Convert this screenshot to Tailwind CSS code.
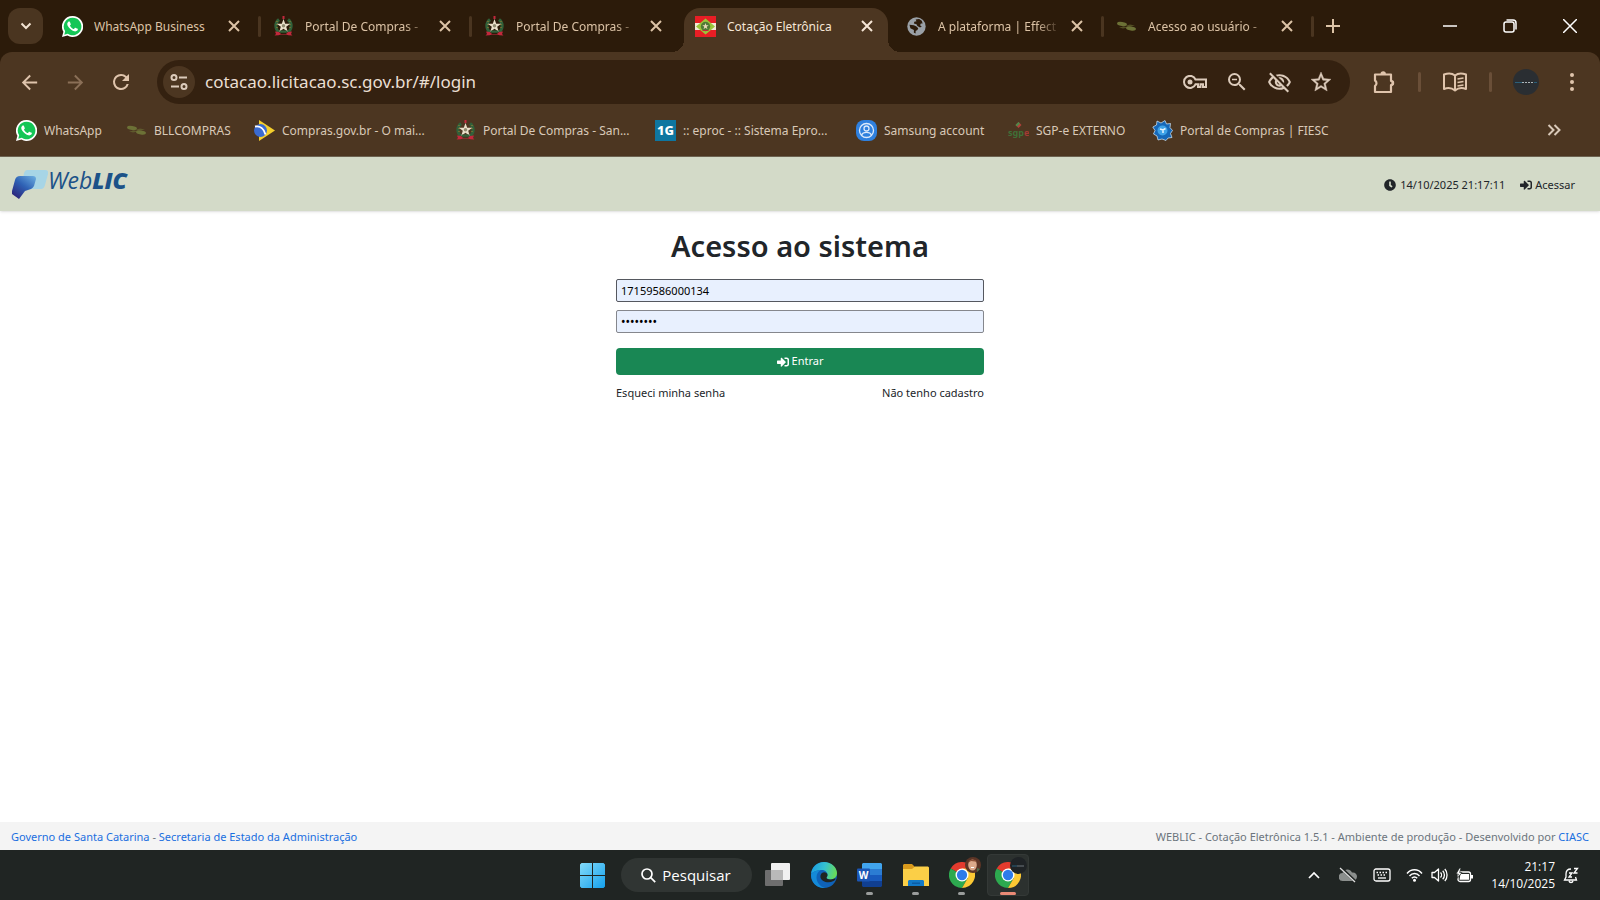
<!DOCTYPE html>
<html lang="pt-BR">

<head>
    <meta charset="UTF-8">
    <meta name="viewport" content="width=device-width, initial-scale=1.0">
    <title>Cotação Eletrônica</title>
    <script src="https://cdn.jsdelivr.net/npm/@tailwindcss/browser@4"></script>
</head>

<body class="h-screen flex flex-col overflow-hidden bg-white font-['Noto_Sans','Open_Sans',sans-serif] text-[#212529]">

    <!-- Shared icons -->
    <svg class="hidden" aria-hidden="true">
        <symbol id="whatsapp" viewBox="0 0 24 24">
            <path fill="#fff" d="M12 0a12 12 0 0 0-10.4 18L0 24l6.200-1.600A12 12 0 1 0 12 0z" />
            <path fill="#14c656" d="M12 2a10 10 0 0 0-8.400 15.400L2.600 21.300l4-1A10 10 0 1 0 12 2z" />
            <path fill="#fff"
                d="M17.472 14.382c-.297-.149-1.758-.867-2.030-.967-.273-.099-.471-.148-.670.150-.197.297-.767.966-.940 1.164-.173.199-.347.223-.644.075-.297-.150-1.255-.463-2.390-1.475-.883-.788-1.480-1.761-1.653-2.059-.173-.297-.018-.458.130-.606.134-.133.298-.347.446-.520.149-.174.198-.298.298-.497.099-.198.050-.371-.025-.520-.075-.149-.669-1.612-.916-2.207-.242-.579-.487-.500-.669-.510-.173-.008-.371-.010-.570-.010-.198 0-.520.074-.792.372-.272.297-1.040 1.016-1.040 2.479 0 1.462 1.065 2.875 1.213 3.074.149.198 2.096 3.200 5.077 4.487.709.306 1.262.489 1.694.625.712.227 1.360.195 1.871.118.571-.085 1.758-.719 2.006-1.413.248-.694.248-1.289.173-1.413-.074-.124-.272-.198-.570-.347" />
        </symbol>
        <symbol id="brasao" viewBox="0 0 21 21">
            <path fill="none" stroke="#31613a" stroke-width="3" d="M6 3.500C1.500 7 2 13 6 16.500M15 3.500c4.500 3.500 4 9.500 0 13" />
            <path fill="none" stroke="#a9812f" stroke-width="1" stroke-dasharray="1 2" d="M4 5v9M17 5v9" />
            <path fill="#e9dfc9" d="M10.500 3l1.700 4.700h5l-4 3 1.500 5-4.200-3-4.200 3 1.500-5-4-3h5z" />
            <circle cx="10.500" cy="9.800" r="1.700" fill="#8f8a70" />
            <path fill="#c3283c" d="M9.500 0h2v3h-2zM2 15.500l4 .5 2 2h5l2-2 4-.5-1 2.500 1.500 1.500-4-.2L13 18.500H8l-2.500.8-4 .2L3 18z" />
            <path fill="#31613a" d="M7 14.500h7v2.200H7z" />
        </symbol>
        <symbol id="bll" viewBox="0 0 21 21">
            <g fill="#6c7136">
                <ellipse cx="6" cy="8" rx="5" ry="2" transform="rotate(8 6 8)" />
                <ellipse cx="15" cy="12.500" rx="5" ry="2" transform="rotate(8 15 12.500)" />
                <path d="M9 10l5-1.500 5 1-5 1zM3 11.500l5-1 4 1-5 1z" opacity=".6" />
            </g>
        </symbol>
        <symbol id="close" viewBox="0 0 12 12">
            <path fill="none" stroke="currentColor" stroke-width="2" d="M1 1l10 10M11 1L1 11" />
        </symbol>
        <symbol id="signin" viewBox="0 0 512 512">
            <path fill="currentColor"
                d="M416 448h-84c-6.600 0-12-5.400-12-12v-40c0-6.600 5.400-12 12-12h84c17.700 0 32-14.300 32-32V160c0-17.700-14.300-32-32-32h-84c-6.600 0-12-5.400-12-12V76c0-6.600 5.400-12 12-12h84c53 0 96 43 96 96v192c0 53-43 96-96 96zm-47-201L201 79c-15-15-41-4.500-41 17v96H24c-13.300 0-24 10.700-24 24v96c0 13.300 10.700 24 24 24h136v96c0 21.500 26 32 41 17l168-168c9.300-9.400 9.300-24.600 0-34z" />
        </symbol>
        <symbol id="chrome" viewBox="0 0 48 48">
            <path fill="#e33b2e" d="M24 24L3.200 12A24 24 0 0 1 44.800 12z" />
            <path fill="#2da94f" d="M24 24L3.200 12A24 24 0 0 0 24 48l10.400-18z" />
            <path fill="#fcc934" d="M24 24l10.400 6L24 48A24 24 0 0 0 44.800 12H24z" />
            <circle cx="24" cy="24" r="12" fill="#fff" />
            <circle cx="24" cy="24" r="9.500" fill="#2f7bea" />
        </symbol>
    </svg>

    <!-- Tab strip -->
    <header class="shrink-0 bg-[#2c1b0a]">
        <div class="flex h-[52px] text-[12px] text-[#dcc3a6]">
            <button aria-label="Pesquisar guias" class="mt-2 ml-2 mr-2 h-9 w-[35px] shrink-0 flex items-center justify-center rounded-xl bg-[#4a3520] text-[#f3e3d2]">
                <svg class="w-3 h-3" viewBox="0 0 12 12"><path fill="none" stroke="currentColor" stroke-width="2" d="M1.500 3.500L6 8l4.500-4.500" /></svg>
            </button>
            <nav class="flex min-w-0">
                <div class="w-[211px] min-w-0 flex items-center pl-[11px]">
                    <svg class="w-[21px] h-[21px] mr-[11px] shrink-0"><use href="#whatsapp" /></svg>
                    <a href="#" class="flex-1 pt-0.5 overflow-hidden whitespace-nowrap">WhatsApp Business</a>
                    <button aria-label="Fechar" class="w-8 flex justify-center shrink-0"><svg class="w-3 h-3"><use href="#close" /></svg></button>
                    <span class="ml-2 mr-px w-[3px] h-[21px] rounded bg-[#4a3520]"></span>
                </div>
                <div class="w-[211px] min-w-0 flex items-center pl-[11px]">
                    <svg class="w-[21px] h-[21px] mr-[11px] shrink-0"><use href="#brasao" /></svg>
                    <a href="#" class="flex-1 pt-0.5 overflow-hidden whitespace-nowrap mask-r-from-80%">Portal De Compras -</a>
                    <button aria-label="Fechar" class="w-8 flex justify-center shrink-0"><svg class="w-3 h-3"><use href="#close" /></svg></button>
                    <span class="ml-2 mr-px w-[3px] h-[21px] rounded bg-[#4a3520]"></span>
                </div>
                <div class="w-[211px] min-w-0 flex items-center pl-[11px]">
                    <svg class="w-[21px] h-[21px] mr-[11px] shrink-0"><use href="#brasao" /></svg>
                    <a href="#" class="flex-1 pt-0.5 overflow-hidden whitespace-nowrap mask-r-from-80%">Portal De Compras -</a>
                    <button aria-label="Fechar" class="w-8 mr-3 flex justify-center shrink-0"><svg class="w-3 h-3"><use href="#close" /></svg></button>
                </div>
                <div class="w-[211px] min-w-0 flex pt-2 pr-[7px] text-[#f6e6d6]">
                    <div class="relative flex-1 min-w-0 flex items-center pl-[11px] pb-2 pr-[5px] rounded-t-2xl bg-[#4c3621]">
                        <span class="absolute bottom-0 -left-3 size-3 bg-[radial-gradient(circle_at_0_0,transparent_12px,#4c3621_12px)]"></span>
                        <span class="absolute bottom-0 -right-3 size-3 bg-[radial-gradient(circle_at_100%_0,transparent_12px,#4c3621_12px)]"></span>
                        <svg class="w-[21px] h-[21px] mr-[11px] shrink-0" viewBox="0 0 21 21">
                            <path fill="#e81e25" d="M0 0h21v21H0z" /><path fill="#f4e9d8" d="M0 7h21v7H0z" />
                            <path fill="#9bc53a" d="M10.500 2.500L20 10.500l-9.500 8-9.500-8z" />
                            <circle cx="10.500" cy="10.500" r="4.700" fill="#4f7a35" /><path fill="#e8d8b8" d="M10.500 7l.8 2.300h2.400l-2 1.500.8 2.400-2-1.500-2 1.500.8-2.400-2-1.500h2.400z" />
                            <path fill="#c3283c" d="M7.500 14h6v1h-6z" />
                        </svg>
                        <a href="#" class="flex-1 pt-0.5 overflow-hidden whitespace-nowrap">Cotação Eletrônica</a>
                        <button aria-label="Fechar" class="w-8 flex justify-center shrink-0"><svg class="w-3 h-3"><use href="#close" /></svg></button>
                    </div>
                </div>
                <div class="w-[210px] min-w-0 flex items-center pl-[11px]">
                    <svg class="w-[21px] h-[21px] mr-[11px] shrink-0" viewBox="0 0 24 24"><circle cx="12" cy="12" r="10.500" fill="#9aa0a6" /><path fill="#2c1b0a" d="M4 10l5 .5 3 1.500 2 2-1 2-2 1v3l-2-1v-3l-4-2zM11 4l4-.5 3 2 1 3h-2l-1 2 2 1.500-2 1-3-1.500-1-2-3-1 .5-2L12 6z" /></svg>
                    <a href="#" class="flex-1 pt-0.5 overflow-hidden whitespace-nowrap mask-r-from-80%">A plataforma | Effect</a>
                    <button aria-label="Fechar" class="w-8 flex justify-center shrink-0"><svg class="w-3 h-3"><use href="#close" /></svg></button>
                    <span class="ml-2 mr-px w-[3px] h-[21px] rounded bg-[#4a3520]"></span>
                </div>
                <div class="w-[210px] min-w-0 flex items-center pl-[11px]">
                    <svg class="w-[21px] h-[21px] mr-[11px] shrink-0"><use href="#bll" /></svg>
                    <a href="#" class="flex-1 pt-0.5 overflow-hidden whitespace-nowrap mask-r-from-80%">Acesso ao usuário -</a>
                    <button aria-label="Fechar" class="w-8 flex justify-center shrink-0"><svg class="w-3 h-3"><use href="#close" /></svg></button>
                    <span class="ml-2 mr-px w-[3px] h-[21px] rounded bg-[#4a3520]"></span>
                </div>
            </nav>
            <button aria-label="Nova guia" class="w-9 shrink-0 flex items-center justify-center">
                <svg class="w-[14px] h-[14px]" viewBox="0 0 14 14"><path fill="none" stroke="currentColor" stroke-width="2" d="M7 0v14M0 7h14" /></svg>
            </button>
            <div class="ml-auto flex shrink-0 text-white">
                <button aria-label="Minimizar" class="w-[60px] flex items-center justify-center"><svg class="w-[14px] h-[14px]" viewBox="0 0 14 14"><path stroke="currentColor" stroke-width="1.500" d="M0 7h14" /></svg></button>
                <button aria-label="Restaurar" class="w-[60px] flex items-center justify-center"><svg class="w-[14px] h-[14px]" viewBox="0 0 14 14"><g fill="none" stroke="currentColor" stroke-width="1.500"><rect x="1" y="3" width="10" height="10" rx="2" /><path d="M3.500 1H10a3 3 0 0 1 3 3v6.500" /></g></svg></button>
                <button aria-label="Fechar janela" class="w-[60px] flex items-center justify-center"><svg class="w-[14px] h-[14px]" viewBox="0 0 14 14"><path stroke="currentColor" stroke-width="1.500" d="M0 0l14 14M14 0L0 14" /></svg></button>
            </div>
        </div>

        <!-- Toolbar -->
        <div class="rounded-t-xl bg-[#4c3621] pt-2 border-b border-[#6e6452]">
            <div class="h-11 flex items-center pl-[6px] pr-4 text-[#dfc4ac]">
                <button aria-label="Voltar" class="w-[46px] flex justify-center"><svg class="w-[23px] h-[23px]" viewBox="0 0 24 24"><path fill="currentColor" d="M20 11H7.830l5.590-5.590L12 4l-8 8 8 8 1.410-1.410L7.830 13H20v-2z" /></svg></button>
                <button aria-label="Avançar" class="w-[46px] flex justify-center text-[#8a6f57]"><svg class="w-[23px] h-[23px]" viewBox="0 0 24 24"><path fill="currentColor" d="M12 4l-1.410 1.410L16.170 11H4v2h12.170l-5.580 5.590L12 20l8-8z" /></svg></button>
                <button aria-label="Recarregar" class="w-[46px] flex justify-center"><svg class="w-6 h-6" viewBox="0 0 24 24"><path fill="currentColor" d="M17.650 6.350A7.958 7.958 0 0 0 12 4a8 8 0 1 0 7.730 10h-2.080A6 6 0 1 1 12 6c1.660 0 3.140.690 4.220 1.780L13 11h7V4z" /></svg></button>
                <div class="ml-[13px] flex-1 min-w-0 h-11 flex items-center rounded-full bg-[#342110] pl-[6px] pr-2 text-[#dccbbb]">
                    <button aria-label="Informações do site" class="w-8 h-8 rounded-full bg-[#4c3621] flex items-center justify-center shrink-0">
                        <svg class="w-[18px] h-[18px]" viewBox="0 0 18 18"><g fill="none" stroke="currentColor" stroke-width="2"><circle cx="4" cy="4.500" r="2.500" /><path d="M9 4.500h8M1 13.500h8" /><circle cx="14" cy="13.500" r="2.500" /></g></svg>
                    </button>
                    <input type="text" aria-label="Endereço" value="cotacao.licitacao.sc.gov.br/#/login" class="ml-[10px] flex-1 min-w-0 text-[17px] text-[#eadfd3] outline-none">
                    <button aria-label="Senhas" class="w-[42px] flex justify-center"><svg class="w-6 h-[14px]" viewBox="0 0 24 14"><g fill="none" stroke="currentColor" stroke-width="2"><path d="M12.500 4.500H23v7.500h-3V9.300h-2.500V12H15V9.300h-2.500A6 6 0 1 1 12.500 4.500z" /></g><circle cx="7" cy="7" r="2.500" fill="currentColor" /></svg></button>
                    <button aria-label="Zoom" class="w-[42px] flex justify-center"><svg class="w-6 h-6" viewBox="0 0 24 24"><path fill="currentColor" d="M15.500 14h-.790l-.280-.270A6.471 6.471 0 0 0 16 9.500 6.500 6.500 0 1 0 9.500 16c1.610 0 3.090-.590 4.230-1.570l.270.280v.790l5 4.990L20.490 19l-4.990-5zm-6 0C7.010 14 5 11.990 5 9.500S7.010 5 9.500 5 14 7.010 14 9.500 11.990 14 9.500 14zM7 8.700h5v1.600H7z" /></svg></button>
                    <button aria-label="Cookies bloqueados" class="w-[42px] flex justify-center"><svg class="w-[25px] h-[25px]" viewBox="0 0 24 24"><path fill="currentColor" d="M12 6c3.790 0 7.170 2.130 8.820 5.500-.590 1.220-1.420 2.270-2.410 3.120l1.410 1.410c1.390-1.230 2.490-2.770 3.180-4.530C21.270 7.110 17 4 12 4c-1.270 0-2.490.200-3.640.570l1.650 1.650C10.660 6.090 11.320 6 12 6zm-1.070 1.140L13 9.210c.570.250 1.030.710 1.280 1.280l2.070 2.070c.080-.340.140-.700.140-1.070C16.500 9.010 14.480 7 12 7c-.370 0-.720.050-1.070.140zM2.010 3.870l2.680 2.680C3.060 7.830 1.770 9.530 1 11.500 2.730 15.890 7 19 12 19c1.520 0 2.980-.290 4.320-.820l3.420 3.420 1.410-1.410L3.420 2.450 2.010 3.870zm7.500 7.500l2.610 2.610c-.040.010-.080.020-.120.020-1.380 0-2.500-1.120-2.500-2.500 0-.050.010-.080.010-.130zm-3.400-3.400l1.750 1.750c-.230.550-.360 1.150-.360 1.780 0 2.480 2.020 4.500 4.500 4.500.630 0 1.230-.130 1.770-.360l.980.980c-.880.240-1.800.380-2.750.380-3.790 0-7.170-2.130-8.820-5.500.700-1.430 1.720-2.610 2.930-3.530z" /></svg></button>
                    <button aria-label="Favoritar" class="w-[42px] flex justify-center"><svg class="w-6 h-6" viewBox="0 0 24 24"><path fill="currentColor" stroke="currentColor" stroke-width=".4" d="M22 9.240l-7.190-.620L12 2 9.190 8.630 2 9.240l5.460 4.730L5.820 21 12 17.270 18.180 21l-1.630-7.030L22 9.240zM12 15.400l-3.760 2.270 1-4.280-3.320-2.880 4.380-.380L12 6.100l1.710 4.040 4.380.380-3.320 2.880 1 4.280L12 15.400z" /></svg></button>
                </div>
                <button aria-label="Extensões" class="w-[68px] flex justify-center"><svg class="w-6 h-6" viewBox="0 0 24 24"><path fill="none" stroke="currentColor" stroke-width="2.200" stroke-linejoin="round" d="M3 4.500h16V11a2 2 0 0 1 0 4v7H3v-6a3.300 3.300 0 0 0 0-5.500z" /><path fill="currentColor" d="M8.500 4a2.700 2.700 0 0 1 5.400 0zM19.500 10.300a2.700 2.700 0 0 1 0 5.400z" /></svg></button>
                <span class="w-[3px] h-5 rounded bg-[#6a4f38]"></span>
                <button aria-label="Modo de leitura" class="w-[68px] flex justify-center"><svg class="w-6 h-5" viewBox="0 0 24 20"><path fill="none" stroke="currentColor" stroke-width="2" stroke-linejoin="round" d="M12 3.500C9 1 5 1 1 2.500V17c4-1.500 8-1 11 1.500 3-2.500 7-3 11-1.500V2.500C19 1 15 1 12 3.500zV18" /><path stroke="currentColor" stroke-width="1.500" d="M14.500 7l6-1M14.500 10.500l6-1M14.500 14l6-1" /></svg></button>
                <span class="w-[3px] h-5 rounded bg-[#6a4f38]"></span>
                <button aria-label="Perfil" class="w-[68px] flex justify-center"><svg class="w-[26px] h-[26px]" viewBox="0 0 26 26"><circle cx="13" cy="13" r="13" fill="#2a2e32" /><path stroke="#2b5f78" d="M2 13.500h7" /><path stroke="#aeb6ba" stroke-dasharray="2 1" d="M9 13.500h12" /><path stroke="#2b5f78" d="M21 13.500h3" /></svg></button>
                <button aria-label="Menu" class="w-6 flex justify-center"><svg class="w-1 h-[18px]" viewBox="0 0 4 18"><g fill="currentColor"><circle cx="2" cy="2" r="2" /><circle cx="2" cy="9" r="2" /><circle cx="2" cy="16" r="2" /></g></svg></button>
            </div>

            <!-- Bookmarks -->
            <nav class="h-[52px] flex items-center pl-4 pr-[39px] text-[12px] text-[#d9c9b8] whitespace-nowrap">
                <a href="#" class="w-[110px] flex items-center gap-[7px]"><svg class="w-[21px] h-[21px] shrink-0"><use href="#whatsapp" /></svg><span class="pt-0.5">WhatsApp</span></a>
                <a href="#" class="w-[128px] flex items-center gap-[7px]"><svg class="w-[21px] h-[21px] shrink-0"><use href="#bll" /></svg><span class="pt-0.5">BLLCOMPRAS</span></a>
                <a href="#" class="w-[201px] flex items-center gap-[7px]">
                    <svg class="w-[21px] h-[21px] shrink-0" viewBox="0 0 21 21"><path fill="#f5cf2c" d="M5 0l16 10.500L5 21z" /><circle cx="6.500" cy="10.500" r="6.500" fill="#3a6bd0" /><path fill="none" stroke="#fff" stroke-width="1.800" d="M1 6.500c5-1 9 2 10.500 8" /></svg>
                    <span class="pt-0.5">Compras.gov.br - O mai...</span></a>
                <a href="#" class="w-[200px] flex items-center gap-[7px]"><svg class="w-[21px] h-[21px] shrink-0"><use href="#brasao" /></svg><span class="pt-0.5">Portal De Compras - San...</span></a>
                <a href="#" class="w-[201px] flex items-center gap-[7px]">
                    <span class="w-[21px] h-[21px] shrink-0 bg-[#0e76a0] text-white text-[13px] font-extrabold leading-[21px] text-center">1G</span>
                    <span class="pt-0.5">:: eproc - :: Sistema Epro...</span></a>
                <a href="#" class="w-[152px] flex items-center gap-[7px]">
                    <svg class="w-[21px] h-[21px] shrink-0" viewBox="0 0 21 21"><rect width="21" height="21" rx="8" fill="#2f80de" /><g fill="none" stroke="#dbe9fb" stroke-width="1.300"><circle cx="10.500" cy="10.500" r="7" /><circle cx="10.500" cy="8.500" r="2.500" /><path d="M5.500 15c1.500-3.500 8.500-3.500 10 0" /></g></svg>
                    <span class="pt-0.5">Samsung account</span></a>
                <a href="#" class="w-[144px] flex items-center gap-[7px]">
                    <svg class="w-[21px] h-[21px] shrink-0" viewBox="0 0 21 21"><path fill="#b0413a" d="M10.500 2l3 3-3 3-3-3z" /><path fill="#4c8a4a" d="M10.500 2l1.500 1.500-3 3L7.500 5z" /><text x="0" y="16" font-size="9" font-weight="700" fill="#3f7038">sgp<tspan fill="#a33a34">e</tspan></text></svg>
                    <span class="pt-0.5">SGP-e EXTERNO</span></a>
                <a href="#" class="flex items-center gap-[7px]">
                    <svg class="w-[21px] h-[21px] shrink-0" viewBox="0 0 21 21"><path fill="#1668b8" stroke="#d9ecfb" stroke-width=".7" d="M5 1l4 2 4-2.500 1.500 3.500 4-.5-.5 4 2.500 3-2 3 1.500 4-4 .5-2 2.500-4-1.500-4 1L5 16l-3.500-2L3 10.500.8 7 4.500 5z" /><circle cx="10.500" cy="10.500" r="5" fill="#3fa3e8" /><path fill="none" stroke="#e6f5ff" stroke-width="1.500" d="M8 9l3 1 2.500-1.500M11 10v3" /></svg>
                    <span class="pt-0.5">Portal de Compras | FIESC</span></a>
                <button aria-label="Mais favoritos" class="ml-auto"><svg class="w-[14px] h-3" viewBox="0 0 14 12"><path fill="none" stroke="currentColor" stroke-width="2" d="M1.500 1l5 5-5 5M7.500 1l5 5-5 5" /></svg></button>
            </nav>
        </div>
    </header>

    <!-- Site header -->
    <div class="z-10 shrink-0 h-[54px] flex items-center justify-between pl-3 pr-[25px] bg-[#d3dac8] shadow-sm text-[11px]">
        <a href="#" aria-label="WebLIC" class="flex h-[30px]">
            <svg class="w-9 h-[30px]" viewBox="0 0 36 30">
                <defs>
                    <linearGradient id="blueShape" x1="1" y1="0" x2="0.200" y2="1"><stop offset="0" stop-color="#6db0e2" /><stop offset="0.500" stop-color="#2f62b5" /><stop offset="1" stop-color="#2b2278" /></linearGradient>
                </defs>
                <path fill="#a7d5e6" d="M15 1h18q4 0 3 4l-3 11q-1 4-4 4H12q-3 0-2-4l2-12q1-3 3-3z" />
                <path fill="url(#blueShape)" d="M8 7h13q3 0 3 3l-2 7q-1 2-3 3l-6 2-6 8-7-5q-1-1 0-3L3 11q1-4 5-4z" />
            </svg>
            <span class="font-['Open_Sans','Noto_Sans',sans-serif] italic text-[23px] leading-[23px] text-[#1c5288]">Web<b class="font-extrabold">LIC</b></span>
        </a>
        <div class="flex items-center gap-[15px] pt-0.5">
            <span class="flex items-center gap-1"><svg class="w-3 h-3" viewBox="0 0 512 512"><path fill="currentColor" d="M256,8C119,8,8,119,8,256S119,504,256,504,504,393,504,256,393,8,256,8Zm57.100,350.100L224.900,294c-3.100-2.300-4.900-5.900-4.900-9.700V116a12,12,0,0,1,12-12h48a12,12,0,0,1,12,12V253.700l63.500,46.200c5.400,3.900,6.500,11.400,2.600,16.800l-28.200,38.800A12,12,0,0,1,313.100,358.100Z" /></svg>14/10/2025 21:17:11</span>
            <a href="#" class="flex items-center gap-[3px]"><svg class="w-3 h-3"><use href="#signin" /></svg>Acessar</a>
        </div>
    </div>

    <!-- Login -->
    <main class="flex-1 min-h-0 flex flex-col items-center pt-4">
        <h1 class="text-[29px] leading-[38px] font-semibold">Acesso ao sistema</h1>
        <form class="mt-[14px] w-[368px] max-w-full flex flex-col text-[11px]">
            <input type="text" aria-label="Usuário" value="17159586000134" class="h-[23px] px-1 border border-[#55585f] rounded-xs bg-[#e8f0fe] text-black">
            <input type="password" aria-label="Senha" value="12345678" class="mt-2 h-[23px] px-1 border border-[#85878d] rounded-xs bg-[#e8f0fe] text-black text-[12px]">
            <button type="button" class="mt-[15px] h-[27px] flex items-center justify-center gap-[3px] rounded bg-[#198754] text-white"><svg class="w-3 h-3"><use href="#signin" /></svg>Entrar</button>
            <div class="mt-[9px] flex justify-between leading-[18px]">
                <a href="#">Esqueci minha senha</a>
                <a href="#">Não tenho cadastro</a>
            </div>
        </form>
    </main>

    <footer class="shrink-0 h-7 flex items-center justify-between px-[11px] pt-0.5 bg-[#f4f4f4] text-[11px] text-[#6c757d]">
        <span><a href="#" class="text-[#1a6fe0]">Governo de Santa Catarina</a> - <a href="#" class="text-[#1a6fe0]">Secretaria de Estado da Administração</a></span>
        <span>WEBLIC - Cotação Eletrônica 1.5.1 - Ambiente de produção - Desenvolvido por <a href="#" class="text-[#1a6fe0]">CIASC</a></span>
    </footer>

    <!-- Taskbar -->
    <div class="shrink-0 h-[50px] grid grid-cols-[1fr_auto_1fr] items-center bg-[#202523] text-white font-['Open_Sans','Noto_Sans',sans-serif]">
        <div></div>
        <div class="flex items-center h-full">
            <button aria-label="Iniciar" class="w-[46px] flex justify-center">
                <svg class="w-[25px] h-[25px]" viewBox="0 0 25 25"><defs><linearGradient id="win" x1="0" y1="0" x2="1" y2="1"><stop offset="0" stop-color="#84dbfb" /><stop offset="1" stop-color="#14a0ec" /></linearGradient></defs><path fill="url(#win)" d="M1.500 0H12v12H0V1.500zM13 0h10.500L25 1.500V12H13zM0 13h12v12H1.500L0 23.500zM13 13h12v10.500L23.500 25H13z" /></svg>
            </button>
            <button class="ml-[5px] mr-[3px] w-[131px] h-[34px] flex items-center justify-center gap-[6px] rounded-full bg-[#303533] text-[15px]">
                <svg class="w-[15px] h-[15px]" viewBox="0 0 15 15"><g fill="none" stroke="currentColor" stroke-width="1.700"><circle cx="6" cy="6" r="5" /><path d="M9.700 9.700l4.500 4.500" /></g></svg>Pesquisar</button>
            <button aria-label="Visão de tarefas" class="w-[46px] flex justify-center"><svg class="w-[25px] h-6" viewBox="0 0 25 24"><rect x="6" width="19" height="17" rx="1" fill="#f1f1f1" /><rect y="7" width="18" height="16" rx="1" fill="#6e6e6e" /><path fill="#b9b9b9" d="M6 7h12v10H6z" /></svg></button>
            <button aria-label="Edge" class="w-[46px] flex justify-center">
                <svg class="w-[26px] h-[26px]" viewBox="0 0 26 26">
                    <defs><linearGradient id="edgeTop" x1="0" y1="0.300" x2="1" y2="0.500"><stop offset="0" stop-color="#1b9de2" /><stop offset="0.500" stop-color="#35c1d0" /><stop offset="1" stop-color="#69dc55" /></linearGradient></defs>
                    <circle cx="13" cy="13" r="13" fill="#0f62b8" />
                    <path fill="url(#edgeTop)" d="M0 12.500C.5 5 6 0 13 0c7.500 0 13 5.500 13 11 0 4-3 6.500-6.500 6.500-2.500 0-4-1-4-1.700 0-.6 1-1 1-3 0-2.500-2.300-4.800-5.500-4.800C6 8 1 10 0 12.500z" />
                    <path fill="#148ad8" d="M0 12.500C2 9.500 6 8 10 8c-3 1.500-4.500 4-4.500 7.500 0 5 3.500 9 8.500 10.500C6 26.500 0 21 0 12.500z" />
                    <path fill="#202523" d="M11 11c2-1.500 5.500-.5 5.500 2 0 1.800-1 2-1 2.800 0 1.200 2.500 2.200 5.500 1.500 1.500-.3 3-1 3.500-.8.500.3-1 2-2 2.500-5 2.500-12 1-13-3.500-.3-2 .3-3.500 1.500-4.500z" />
                </svg>
            </button>
            <button aria-label="Word" class="relative w-[46px] h-full flex justify-center items-center">
                <svg class="w-[25px] h-6" viewBox="0 0 25 24"><path fill="#41a5ee" d="M6 0h18l1 1v5H5V1z" /><path fill="#2b7cd3" d="M5 6h20v6H5z" /><path fill="#185abd" d="M5 12h20v6H5z" /><path fill="#103f91" d="M5 18h20v5l-1 1H6l-1-1z" /><rect y="5.500" width="13" height="13" rx="1" fill="#1b56b5" /><text x="6.500" y="15.500" text-anchor="middle" font-size="10" font-weight="700" fill="#fff">W</text></svg>
                <span class="absolute bottom-[5px] w-[7px] h-[3px] rounded bg-[#9a9d9c]"></span>
            </button>
            <button aria-label="Explorador de arquivos" class="relative w-[46px] h-full flex justify-center items-center">
                <svg class="w-[26px] h-6" viewBox="0 0 26 24"><path fill="#d99a1c" d="M1 1h8l3 3v6H0V2z" /><path fill="#fbcf47" d="M0 6h9l3-2.500h13l1 1V23H0z" /><path fill="#1279c8" d="M6 17h14l1 1v5H5v-5z" /><path fill="#0b5ca5" d="M9 19.500h8V21H9z" /></svg>
                <span class="absolute bottom-[5px] w-[7px] h-[3px] rounded bg-[#9a9d9c]"></span>
            </button>
            <button aria-label="Chrome" class="relative w-[46px] h-full flex justify-center items-center">
                <svg class="w-[26px] h-[26px]"><use href="#chrome" /></svg>
                <svg class="absolute top-[7px] right-1 w-4 h-4" viewBox="0 0 16 16"><circle cx="8" cy="8" r="8" fill="#5c3526" /><ellipse cx="7.500" cy="8" rx="4.300" ry="5.500" fill="#dba98a" /><path fill="#8a4f35" d="M3 6c1-4 7-5 9-1l-2-.5L6 4z" /><path stroke="#fff" d="M6 10.500h3" /><path fill="#4b6b4a" d="M12 11l3 1-3 3z" /></svg>
                <span class="absolute bottom-[5px] w-[7px] h-[3px] rounded bg-[#9a9d9c]"></span>
            </button>
            <button aria-label="Chrome" class="relative w-[46px] h-full flex justify-center items-center">
                <span class="absolute inset-x-[2px] inset-y-1 rounded bg-[#2c312f] border border-[#343937]"></span>
                <svg class="relative w-[26px] h-[26px]"><use href="#chrome" /></svg>
                <svg class="absolute top-[7px] right-1 w-[17px] h-[17px]" viewBox="0 0 17 17"><circle cx="8.500" cy="8.500" r="8.500" fill="#1f2326" /><path stroke="#2b5f78" d="M2 9h5" /><path stroke="#6f777c" d="M7 9h7" /></svg>
                <span class="absolute bottom-[5px] w-4 h-[3px] rounded bg-[#ea8a76]"></span>
            </button>
        </div>
        <div class="flex items-center justify-end pr-[21px]">
            <button aria-label="Ícones ocultos" class="w-8 flex justify-center"><svg class="w-3 h-2" viewBox="0 0 12 8"><path fill="none" stroke="currentColor" stroke-width="1.700" d="M1 7l5-5 5 5" /></svg></button>
            <button aria-label="OneDrive" class="w-9 flex justify-center"><svg class="w-[18px] h-4" viewBox="0 0 18 16"><path fill="#8b8f8d" d="M4 14a4 4 0 0 1-.5-8C5 2 11 1 13 5.500c3-.5 5 1.500 5 4S16 14 14 14z" /><path stroke="#202523" stroke-width="3" d="M2 1l15 14" /><path stroke="#e0e0e0" stroke-width="1.300" d="M1 1l15 14" /></svg></button>
            <button aria-label="Teclado" class="w-8 flex justify-center"><svg class="w-[18px] h-[14px]" viewBox="0 0 18 14"><rect x="1" y="1" width="16" height="12" rx="2" fill="none" stroke="currentColor" stroke-width="1.300" /><path stroke="currentColor" stroke-width="1.500" stroke-dasharray="1.500 1.500" d="M3.500 4.500h11M4.500 7h9" /><path stroke="currentColor" stroke-width="1.300" d="M5 10h8" /></svg></button>
            <div class="ml-2 flex items-center gap-2">
                <svg class="w-[17px] h-[14px]" viewBox="0 0 17 14"><g fill="none" stroke="currentColor" stroke-width="1.400"><path d="M1 5.500c4-5 11-5 15 0M3.500 8c2.700-3.300 7.300-3.300 10 0M5.800 10.300c1.500-1.800 3.900-1.800 5.400 0" /></g><circle cx="8.500" cy="12.200" r="1.500" fill="currentColor" /></svg>
                <svg class="w-[17px] h-[14px]" viewBox="0 0 17 14"><g fill="none" stroke="currentColor" stroke-width="1.300"><path stroke-linejoin="round" d="M1 4.500h2.500L7.500 1v12L3.500 9.500H1z" /><path d="M9.500 4.500c1.300 1.300 1.300 3.700 0 5M11.700 2.700c2.300 2.300 2.300 6.300 0 8.600M13.800 1c3 3 3 9 0 12" /></g></svg>
                <svg class="w-[17px] h-[15px]" viewBox="0 0 17 15"><rect x="2" y="4" width="12.500" height="9.500" rx="2" fill="none" stroke="currentColor" stroke-width="1.300" /><path fill="currentColor" d="M4.500 6H13v5.700H3.500zM15 7h2v3.500h-2z" /><path fill="currentColor" stroke="#202523" stroke-width=".7" d="M3.500 0L0 6h2.300L1 10.500 6 4.500H3.600L5 0z" /></svg>
            </div>
            <div class="ml-[13px] w-[69px] text-right text-[12px] leading-[17px]">21:17<br>14/10/2025</div>
            <svg class="ml-2 w-4 h-[17px]" viewBox="0 0 16 17"><path fill="none" stroke="currentColor" stroke-width="1.300" d="M8 2C5 2 3 4 3 7v3l-1.500 3h12L12.500 10M6 14c.5 2 3.500 2 4 0" /><path fill="none" stroke="currentColor" stroke-width="1.300" d="M6 6h3L6 10h3M11 1.500h3.500L11 6h3.500" /></svg>
        </div>
    </div>
</body>

</html>
